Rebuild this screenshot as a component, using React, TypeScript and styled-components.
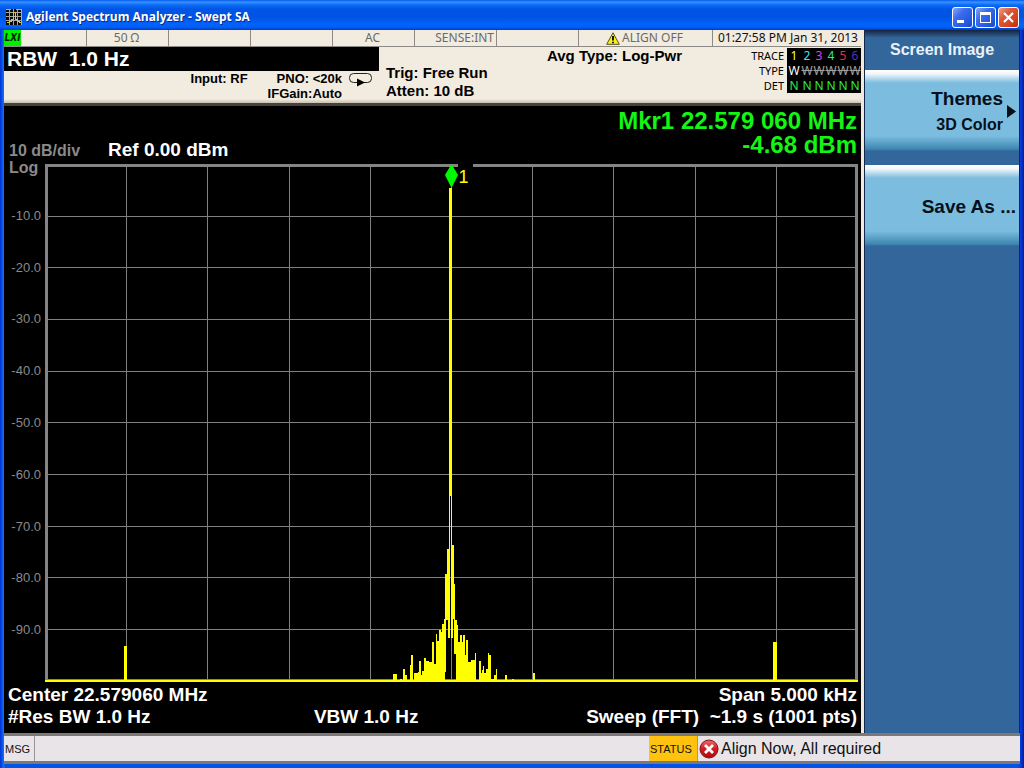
import React from "react";
import styled, { createGlobalStyle } from "styled-components";

const GlobalStyle = createGlobalStyle`
  * { box-sizing: border-box; }
  body { margin: 0; background: #0a4be0; }
  button { font: inherit; cursor: pointer; }
`;

const sans = `"Liberation Sans", Arial, sans-serif`;
const ui = `"Noto Sans", Tahoma, sans-serif`;

const Window = styled.div`
  display: flex;
  flex-direction: column;
  min-height: 100vh;
  padding: 0 4px 4px;
  background: linear-gradient(90deg, #0831d9 0, #0054e8 2px, #2a6fee 4px, #0054e8 5px, #0054e8 calc(100% - 5px), #0a3fe0 calc(100% - 4px), #001ea0 100%);
  font-family: ${sans};
`;

const TitleBar = styled.header`
  display: flex;
  align-items: center;
  height: 30px;
  margin: 0 -4px;
  padding: 4px 5px 0 6px;
  background: linear-gradient(180deg, #0058ee 0, #3a93ff 2px, #0a6cf5 5px, #0055e5 9px, #0054e3 17px, #0262fb 24px, #0160f8 27px, #003cc8 30px);
`;

const Title = styled.h1`
  flex: 1;
  margin: 0 0 0 4px;
  color: #fff;
  font: 700 12px/18px "Open Sans", "Trebuchet MS", sans-serif;
  text-shadow: 1px 1px 0 #0a2a80;
  white-space: nowrap;
`;

const WindowButtons = styled.div`
  display: flex;
  gap: 2px;
`;

const WindowButton = styled.button<{ $close?: boolean }>`
  display: block;
  width: 21px;
  height: 21px;
  padding: 0;
  border: 1px solid #fff;
  border-radius: 3px;
  background: ${(p) =>
    p.$close
      ? "linear-gradient(135deg, #f0a088 0, #e0583a 35%, #d4401c 75%, #b83010 100%)"
      : "linear-gradient(135deg, #88a8f8 0, #3c6cec 35%, #2458e0 75%, #1848c8 100%)"};

  svg { display: block; }
`;

const Body = styled.div`
  display: flex;
  flex: 1;
`;

const Main = styled.main`
  display: flex;
  flex: 1;
  flex-direction: column;
  min-width: 0;
  border-right: 3px solid #f1ebdf;
`;

const IndicatorRow = styled.div`
  display: grid;
  grid-template-columns: 83fr repeat(6, 82fr) 134fr 148fr;
  height: 17px;
  border-bottom: 1px solid #8c8a84;
  background: #f2ebdf;
`;

const Indicator = styled.div<{ $align?: string; $dark?: boolean }>`
  display: flex;
  align-items: center;
  justify-content: ${(p) => p.$align || "center"};
  gap: 2px;
  min-width: 0;
  padding: 0 2px 0 0;
  border-right: 1px solid #8c8a84;
  color: ${(p) => (p.$dark ? "#111" : "#6c6a66")};
  font: 12px/16px ${ui};
  white-space: nowrap;

  &:last-child { border-right: 0; padding-right: 3px; }
`;

const LxiBadge = styled.span`
  width: 17px;
  background: #00f000;
  color: #052005;
  font: italic 700 10px/16px "DejaVu Sans Condensed", ${sans};
  text-align: center;
`;

const Settings = styled.section`
  display: grid;
  grid-template-columns: 375fr 161fr 321fr;
  height: 59px;
  border-bottom: 3px solid #45423c;
  background: linear-gradient(180deg, #f2ebdf 52px, #c8c0b0 56px);
`;

const ParameterReadout = styled.div`
  height: 24px;
  padding-left: 3px;
  background: #000;
  color: #fff;
  font: 700 21px/24px ${sans};
  white-space: pre;
`;

const InputInfo = styled.div`
  display: grid;
  grid-template-columns: 1fr auto auto;
  column-gap: 6px;
  padding-right: 6px;
  font: 700 13px/15px ${sans};
  white-space: nowrap;
`;

const InputLabel = styled.span`
  padding-right: 14px;
  text-align: right;
`;

const GainInfo = styled.div`
  text-align: right;
`;

const SweepIcon = styled.svg`
  display: block;
`;

const TriggerInfo = styled.div`
  padding: 17px 0 0 7px;
  font: 700 15px/18px ${sans};
  white-space: nowrap;
`;

const TraceInfo = styled.div`
  display: flex;
  justify-content: space-between;
`;

const AverageInfo = styled.span`
  padding-left: 7px;
  font: 700 15px/18px ${sans};
  white-space: nowrap;
`;

const TraceTable = styled.table`
  align-self: flex-start;
  margin-top: 1px;
  border-collapse: collapse;
  font: 11px/15px ${ui};

  th {
    padding: 0 3px 0 0;
    font-weight: 400;
    text-align: right;
  }
  td {
    width: 12px;
    height: 15px;
    padding: 0;
    background: #000;
    font-size: 12px;
    text-align: center;
  }
  td:nth-child(2) { width: 14px; }
`;

const TraceCell = styled.td<{ $color: string; $struck?: boolean }>`
  color: ${(p) => p.$color};
  text-decoration: ${(p) => (p.$struck ? "line-through" : "none")};
`;

const Display = styled.section`
  display: flex;
  flex: 1;
  flex-direction: column;
  padding: 0 3px 5px 0;
  background: #000;
  color: #fff;
`;

const DisplayHead = styled.div`
  display: flex;
  align-items: flex-end;
  height: 58px;
  padding: 0 1px 0 5px;
`;

const ScaleLabel = styled.div`
  width: 99px;
  margin-bottom: -12px;
  color: #8a8a8a;
  font: 700 16px/17px ${sans};
`;

const ReferenceLevel = styled.div`
  flex: 1;
  margin-bottom: 4px;
  font: 700 19px/20px ${sans};
`;

const MarkerReadout = styled.div`
  margin-bottom: 7px;
  color: #14f514;
  font: 700 24px/24px ${sans};
  text-align: right;
`;

const ChartArea = styled.div`
  display: flex;
  flex: 1;
`;

const AxisScale = styled.div`
  display: flex;
  flex-direction: column;
  width: 41px;
  padding-right: 4px;
  color: #8a8a8a;
  font: 13px/16px ${sans};
  text-align: right;

  &::before, &::after { content: ""; flex: 1; }
`;

const AxisTick = styled.div`
  display: flex;
  flex: 2;
  align-items: center;
  justify-content: flex-end;
`;

const Plot = styled.div`
  position: relative;
  flex: 1;
  min-height: 300px;
`;

const PlotSvg = styled.svg`
  position: absolute;
  inset: 0;
  width: 100%;
  height: 100%;
`;

const MarkerFlag = styled.div`
  position: absolute;
  top: 0;
  left: 50%;
  display: flex;
  width: 28px;
  margin-left: -7px;
  color: #ffff00;
  font: 18px/26px ${sans};

  svg { flex: none; }
  span {
    flex: 1;
    padding-left: 1px;
    background: #000;
  }
`;

const DisplayFoot = styled.div`
  display: grid;
  grid-template-columns: 307fr 200fr 345fr;
  padding: 2px 1px 0 4px;
  font: 700 19px/22px ${sans};
  white-space: pre;
`;

const FootCell = styled.span<{ $right?: boolean }>`
  text-align: ${(p) => (p.$right ? "right" : "left")};
`;

const Menu = styled.nav`
  display: flex;
  flex: none;
  flex-direction: column;
  gap: 14px;
  width: 156px;
  border: solid #12284a;
  border-width: 0 1px;
  background: linear-gradient(180deg, #14233c 0, #33679c 8px);
`;

const MenuTitle = styled.h2`
  height: 40px;
  margin: 0 0 -14px;
  color: #e8f2fa;
  font: 700 16px/39px ${sans};
  text-align: center;
`;

const MenuButton = styled.button`
  display: flex;
  align-items: center;
  justify-content: flex-end;
  gap: 4px;
  height: 81px;
  padding: 2px 3px 0 0;
  border: 0;
  background: linear-gradient(180deg, #fff 0, #f0f6fa 4px, #7bbcdf 13px, #7bbcdf 66px, #3e87b0 79px, #33679c 81px);
  color: #06101a;
  font: 700 19px/26px ${sans};
  text-align: right;

  small {
    display: block;
    font-size: 16px;
  }
`;

const StatusBar = styled.footer`
  display: flex;
  height: 31px;
  border-top: 3px solid #7c7878;
  border-bottom: 3px solid #7c7878;
  background: #e8e4e7;
  color: #111;
  white-space: nowrap;
`;

const StatusTag = styled.div<{ $alert?: boolean }>`
  display: flex;
  align-items: center;
  width: ${(p) => (p.$alert ? 49 : 31)}px;
  padding-left: 1px;
  border-right: 1px solid #9a9696;
  background: ${(p) => (p.$alert ? "#ffc20e" : "transparent")};
  font: 11px/24px ${sans};
`;

const Message = styled.div`
  flex: 614;
`;

const StatusMessage = styled.div`
  display: flex;
  flex: 321;
  align-items: center;
  gap: 2px;
  padding-left: 1px;
  font: 16px/24px ${sans};
`;

const traceColors = ["#ffff30", "#40e0f0", "#e040e0", "#30e890", "#f02848", "#5030c0"];

// Spectrum bars as [x, width, top, bottom] in plot units.
const BASE = 518;
const bars: number[][] = [
  [79, 3, 482, BASE], [322, 4, 516, BASE],
  [348, 4, 510, BASE], [355, 2, 515, BASE], [358, 2, 505, BASE], [360, 2, 511, BASE],
  [365, 1, 501, BASE], [366, 2, 491, BASE], [369, 4, 509, BASE], [373, 1, 508, BASE],
  [374, 2, 497, BASE], [376, 1, 511, BASE], [377, 2, 507, BASE], [379, 2, 494, BASE],
  [381, 3, 497, BASE], [384, 3, 498, BASE], [387, 2, 478, BASE], [389, 2, 500, BASE],
  [391, 1, 470, BASE], [392, 2, 477, BASE], [394, 2, 466, BASE], [396, 1, 468, BASE],
  [397, 2, 460, BASE], [399, 1, 455, BASE], [400, 1, 410, 508], [401, 1, 410, 456],
  [402, 1, 385, 456], [403, 1, 385, 474], [404, 1, 24, 474], [405, 1, 24, 332],
  [406, 1, 24, 474], [407, 1, 381, 474], [408, 1, 381, 455], [409, 1, 420, 490],
  [410, 1, 456, 490], [411, 1, 456, BASE], [412, 1, 461, BASE], [413, 2, 478, BASE],
  [415, 2, 471, BASE], [417, 1, 478, BASE], [418, 2, 471, BASE], [420, 1, 491, BASE],
  [421, 2, 476, BASE], [423, 3, 498, BASE], [426, 4, 496, BASE], [430, 1, 489, BASE],
  [434, 2, 497, BASE], [436, 1, 509, BASE], [437, 1, 506, BASE], [438, 1, 502, BASE],
  [439, 2, 509, BASE], [441, 2, 505, BASE], [443, 1, 489, BASE], [444, 2, 491, BASE],
  [446, 3, 515, BASE], [449, 2, 511, BASE], [451, 1, 505, BASE], [460, 2, 511, BASE],
  [467, 2, 515, BASE], [488, 2, 509, BASE], [504, 2, 516, BASE], [728, 4, 478, BASE],
];

const gridX = [81, 162, 244, 325, 406, 487, 568, 650, 731];
const gridY = [52, 103, 155, 207, 258, 310, 362, 413, 465];

function AppIcon() {
  return (
    <svg width="16" height="16" viewBox="0 0 16 16" shapeRendering="crispEdges" aria-hidden="true">
      <rect width="16" height="16" fill="#0a0a08" />
      <path d="M0 3.5H16M0 7.5H16M0 11.5H16M3.5 0V16M7.5 0V16M11.5 0V16" stroke="#a8a698" />
      <path d="M15.5 0V16M0 .5H5M10 .5H16" stroke="#b0aea0" />
      <path d="M1 13H3V12H5V10H7V3H9V10H11V12H13V13H15" stroke="#d8d020" fill="none" />
    </svg>
  );
}

function Spectrum() {
  return (
    <Plot>
      <PlotSvg viewBox="0 0 813 518" preserveAspectRatio="none" shapeRendering="crispEdges" role="img" aria-label="Spectrum trace">
        {gridX.map((x) => <rect key={x} x={x} y="0" width="1" height="515" fill="#808080" />)}
        {gridY.map((y) => <rect key={y} x="0" y={y} width="813" height="1" fill="#808080" />)}
        <path d="M0 0H813V517H0ZM3 3V515H810V3Z" fill="#848484" fillRule="evenodd" />
        <rect x="0" y="516" width="813" height="2" fill="#ffff00" />
        {bars.map(([x, w, top, bottom]) => (
          <rect key={x} x={x} y={top} width={w} height={bottom - top} fill="#ffff00" />
        ))}
      </PlotSvg>
      <MarkerFlag>
        <svg width="13" height="24" viewBox="0 0 13 24" aria-hidden="true">
          <path d="M6.500 0L13 11L6.500 24L0 11Z" fill="#00f800" />
        </svg>
        <span>1</span>
      </MarkerFlag>
    </Plot>
  );
}

export default function App() {
  return (
    <>
      <GlobalStyle />
      <Window>
        <TitleBar>
          <AppIcon />
          <Title>Agilent Spectrum Analyzer - Swept SA</Title>
          <WindowButtons>
            <WindowButton aria-label="Minimize">
              <svg width="19" height="19"><rect x="4" y="12" width="7" height="3" fill="#fff" /></svg>
            </WindowButton>
            <WindowButton aria-label="Maximize">
              <svg width="19" height="19" shapeRendering="crispEdges">
                <path d="M4 4H15V15H4ZM5 7V14H14V7Z" fill="#fff" fillRule="evenodd" />
              </svg>
            </WindowButton>
            <WindowButton $close aria-label="Close">
              <svg width="19" height="19"><path d="M5 5L14 14M14 5L5 14" stroke="#fff" strokeWidth="2.200" /></svg>
            </WindowButton>
          </WindowButtons>
        </TitleBar>

        <Body>
          <Main>
            <IndicatorRow>
              <Indicator $align="flex-start"><LxiBadge>LXI</LxiBadge></Indicator>
              <Indicator>50 Ω</Indicator>
              <Indicator />
              <Indicator />
              <Indicator>AC</Indicator>
              <Indicator $align="flex-end">SENSE:INT</Indicator>
              <Indicator />
              <Indicator>
                <svg width="14" height="13" viewBox="0 0 14 13" aria-hidden="true">
                  <path d="M7 .8L13.300 12.300H.7Z" fill="#f8f020" stroke="#55501a" strokeLinejoin="round" />
                  <path d="M7 4V8.500M7 9.700V11.200" stroke="#000" strokeWidth="1.800" />
                </svg>
                ALIGN OFF
              </Indicator>
              <Indicator $dark $align="flex-end">01:27:58 PM Jan 31, 2013</Indicator>
            </IndicatorRow>

            <Settings>
              <div>
                <ParameterReadout>{"RBW  1.0 Hz"}</ParameterReadout>
                <InputInfo>
                  <InputLabel>Input: RF</InputLabel>
                  <GainInfo>PNO: &lt;20k<br />IFGain:Auto</GainInfo>
                  <SweepIcon width="25" height="16" viewBox="0 0 25 16" aria-hidden="true">
                    <rect x="1.500" y="2.500" width="22" height="9" rx="4" fill="none" stroke="#222" />
                    <path d="M9 7.500L17 11.500L9 15.500Z" fill="#000" />
                  </SweepIcon>
                </InputInfo>
              </div>
              <TriggerInfo>Trig: Free Run<br />Atten: 10 dB</TriggerInfo>
              <TraceInfo>
                <AverageInfo>Avg Type: Log-Pwr</AverageInfo>
                <TraceTable>
                  <tbody>
                    <tr>
                      <th scope="row">TRACE</th>
                      {traceColors.map((c, i) => <TraceCell key={c} $color={c}>{i + 1}</TraceCell>)}
                    </tr>
                    <tr>
                      <th scope="row">TYPE</th>
                      {traceColors.map((c, i) => (
                        <TraceCell key={c} $color={i ? "#a0a0a0" : "#fff"} $struck={i > 0}>W</TraceCell>
                      ))}
                    </tr>
                    <tr>
                      <th scope="row">DET</th>
                      {traceColors.map((c) => <TraceCell key={c} $color="#30e840">N</TraceCell>)}
                    </tr>
                  </tbody>
                </TraceTable>
              </TraceInfo>
            </Settings>

            <Display>
              <DisplayHead>
                <ScaleLabel>10 dB/div<br />Log</ScaleLabel>
                <ReferenceLevel>Ref 0.00 dBm</ReferenceLevel>
                <MarkerReadout>Mkr1 22.579 060 MHz<br />-4.68 dBm</MarkerReadout>
              </DisplayHead>
              <ChartArea>
                <AxisScale>
                  {gridY.map((y, i) => <AxisTick key={y}>{`-${(i + 1) * 10}.0`}</AxisTick>)}
                </AxisScale>
                <Spectrum />
              </ChartArea>
              <DisplayFoot>
                <FootCell>Center 22.579060 MHz</FootCell>
                <FootCell />
                <FootCell $right>Span 5.000 kHz</FootCell>
                <FootCell>#Res BW 1.0 Hz</FootCell>
                <FootCell>VBW 1.0 Hz</FootCell>
                <FootCell $right>{"Sweep (FFT)  ~1.9 s (1001 pts)"}</FootCell>
              </DisplayFoot>
            </Display>
          </Main>

          <Menu>
            <MenuTitle>Screen Image</MenuTitle>
            <MenuButton>
              <span>Themes<small>3D Color</small></span>
              <svg width="9" height="13" aria-hidden="true"><path d="M0 0L9 6.500L0 13Z" fill="#06101a" /></svg>
            </MenuButton>
            <MenuButton>Save As ...</MenuButton>
          </Menu>
        </Body>

        <StatusBar>
          <StatusTag>MSG</StatusTag>
          <Message />
          <StatusTag $alert>STATUS</StatusTag>
          <StatusMessage>
            <svg width="20" height="20" viewBox="0 0 20 20" aria-hidden="true">
              <defs>
                <linearGradient id="alert" x1="0" y1="0" x2="0" y2="1">
                  <stop offset="0" stopColor="#f06a6a" />
                  <stop offset="0.500" stopColor="#d01c20" />
                  <stop offset="1" stopColor="#a80c10" />
                </linearGradient>
              </defs>
              <circle cx="10" cy="10" r="9" fill="url(#alert)" stroke="#8a1014" />
              <path d="M6 6L14 14M14 6L6 14" stroke="#fff" strokeWidth="2.800" />
            </svg>
            Align Now, All required
          </StatusMessage>
        </StatusBar>
      </Window>
    </>
  );
}
